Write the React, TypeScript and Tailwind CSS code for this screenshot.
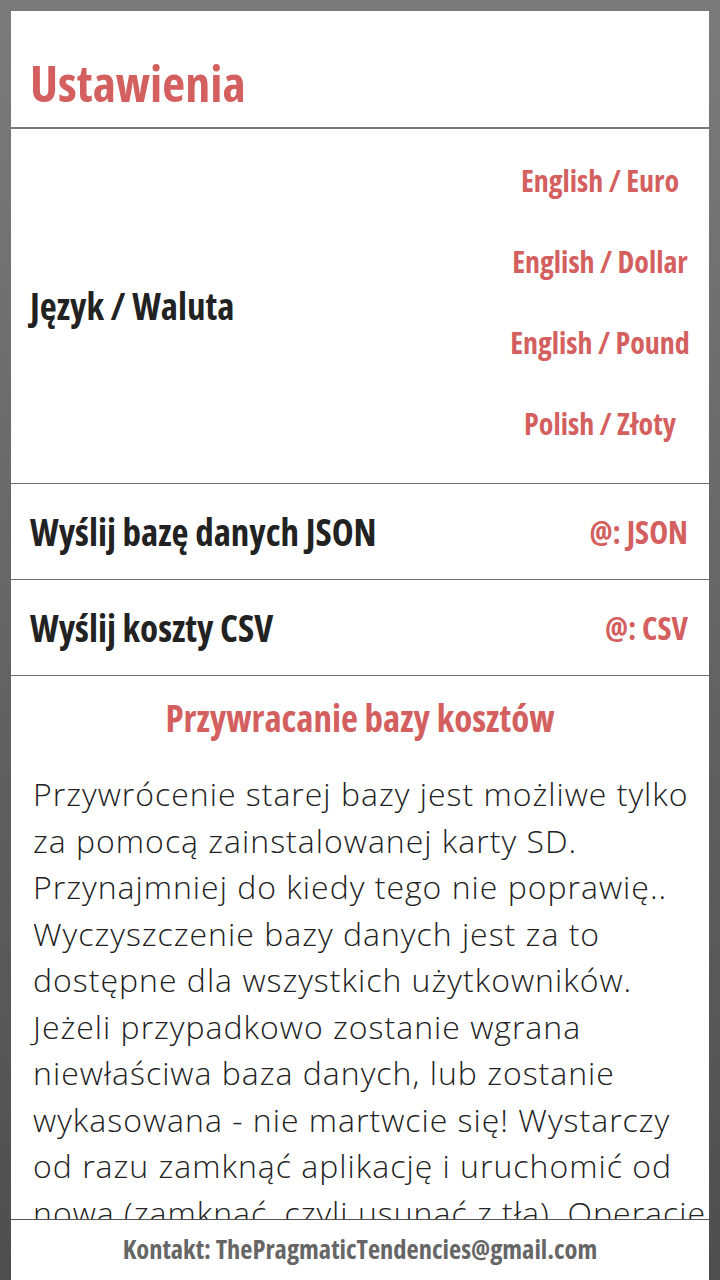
import React from "react";

const narrow: React.CSSProperties = {
  fontFamily: '"Open Sans", "DejaVu Sans", sans-serif',
  fontStretch: "75%",
};
const light: React.CSSProperties = { fontFamily: '"Open Sans", Lato, sans-serif' };

const lines = [
  "Przywrócenie starej bazy jest możliwe tylko",
  "za pomocą zainstalowanej karty SD.",
  "Przynajmniej do kiedy tego nie poprawię..",
  "Wyczyszczenie bazy danych jest za to",
  "dostępne dla wszystkich użytkowników.",
  "Jeżeli przypadkowo zostanie wgrana",
  "niewłaściwa baza danych, lub zostanie",
  "wykasowana - nie martwcie się! Wystarczy",
  "od razu zamknąć aplikację i uruchomić od",
  "nowa (zamknąć, czyli usunąć z tła). Operacje",
  "na bazie danych są wykonywane dopiero po",
];

export default function App() {
  return (
    <div className="h-[1280px] w-[720px] overflow-hidden bg-gradient-to-b from-[#7b7b7b] to-[#4e4e4e] px-[11px] pt-[11px]">
      <div className="flex h-full flex-col bg-white">
        <div className="flex h-[118px] shrink-0 items-end border-b-2 border-[#787878] pb-[19px] pl-[19px]">
          <h1 style={narrow} className="text-[50px] font-bold leading-none text-[#d45f5f]">Ustawienia</h1>
        </div>
        <div className="flex h-[355px] shrink-0 items-center justify-between border-b border-[#6e6e6e] pl-[19px]">
          <span style={narrow} className="whitespace-nowrap text-[37px] font-bold text-[#222]">Język / Waluta</span>
          <div className="flex w-[218px] flex-col items-center pb-[8px]">
            {["English / Euro", "English / Dollar", "English / Pound", "Polish / Złoty"].map((o) => (
              <div key={o} style={narrow} className="flex h-[81px] items-center whitespace-nowrap text-[30px] font-bold text-[#d45f5f]">
                {o}
              </div>
            ))}
          </div>
        </div>
        <div className="flex h-[96px] shrink-0 items-center justify-between border-b border-[#6e6e6e] pl-[19px] pr-[21px]">
          <span style={narrow} className="whitespace-nowrap text-[37px] font-bold text-[#222]">Wyślij bazę danych JSON</span>
          <span style={narrow} className="whitespace-nowrap text-[32px] font-bold text-[#d45f5f]">@: JSON</span>
        </div>
        <div className="flex h-[96px] shrink-0 items-center justify-between border-b border-[#6e6e6e] pl-[19px] pr-[21px]">
          <span style={narrow} className="whitespace-nowrap text-[37px] font-bold text-[#222]">Wyślij koszty CSV</span>
          <span style={narrow} className="whitespace-nowrap text-[32px] font-bold text-[#d45f5f]">@: CSV</span>
        </div>
        <div className="min-h-0 flex-1 overflow-hidden">
          <div style={narrow} className="whitespace-nowrap pt-[20px] text-center text-[37px] font-bold leading-[44px] text-[#d45f5f]">
            Przywracanie bazy kosztów
          </div>
          <div style={light} className="mt-[31px] pl-[22px] text-[32px] font-light leading-[46.5px] tracking-[1px] text-[#222]">
            {lines.map((l) => (
              <div key={l} className="whitespace-nowrap">{l}</div>
            ))}
          </div>
        </div>
        <div className="flex h-[61px] shrink-0 items-center justify-center border-t border-[#555]">
          <span style={narrow} className="whitespace-nowrap text-[26.5px] font-bold text-[#666]">Kontakt: ThePragmaticTendencies@gmail.com</span>
        </div>
      </div>
    </div>
  );
}
